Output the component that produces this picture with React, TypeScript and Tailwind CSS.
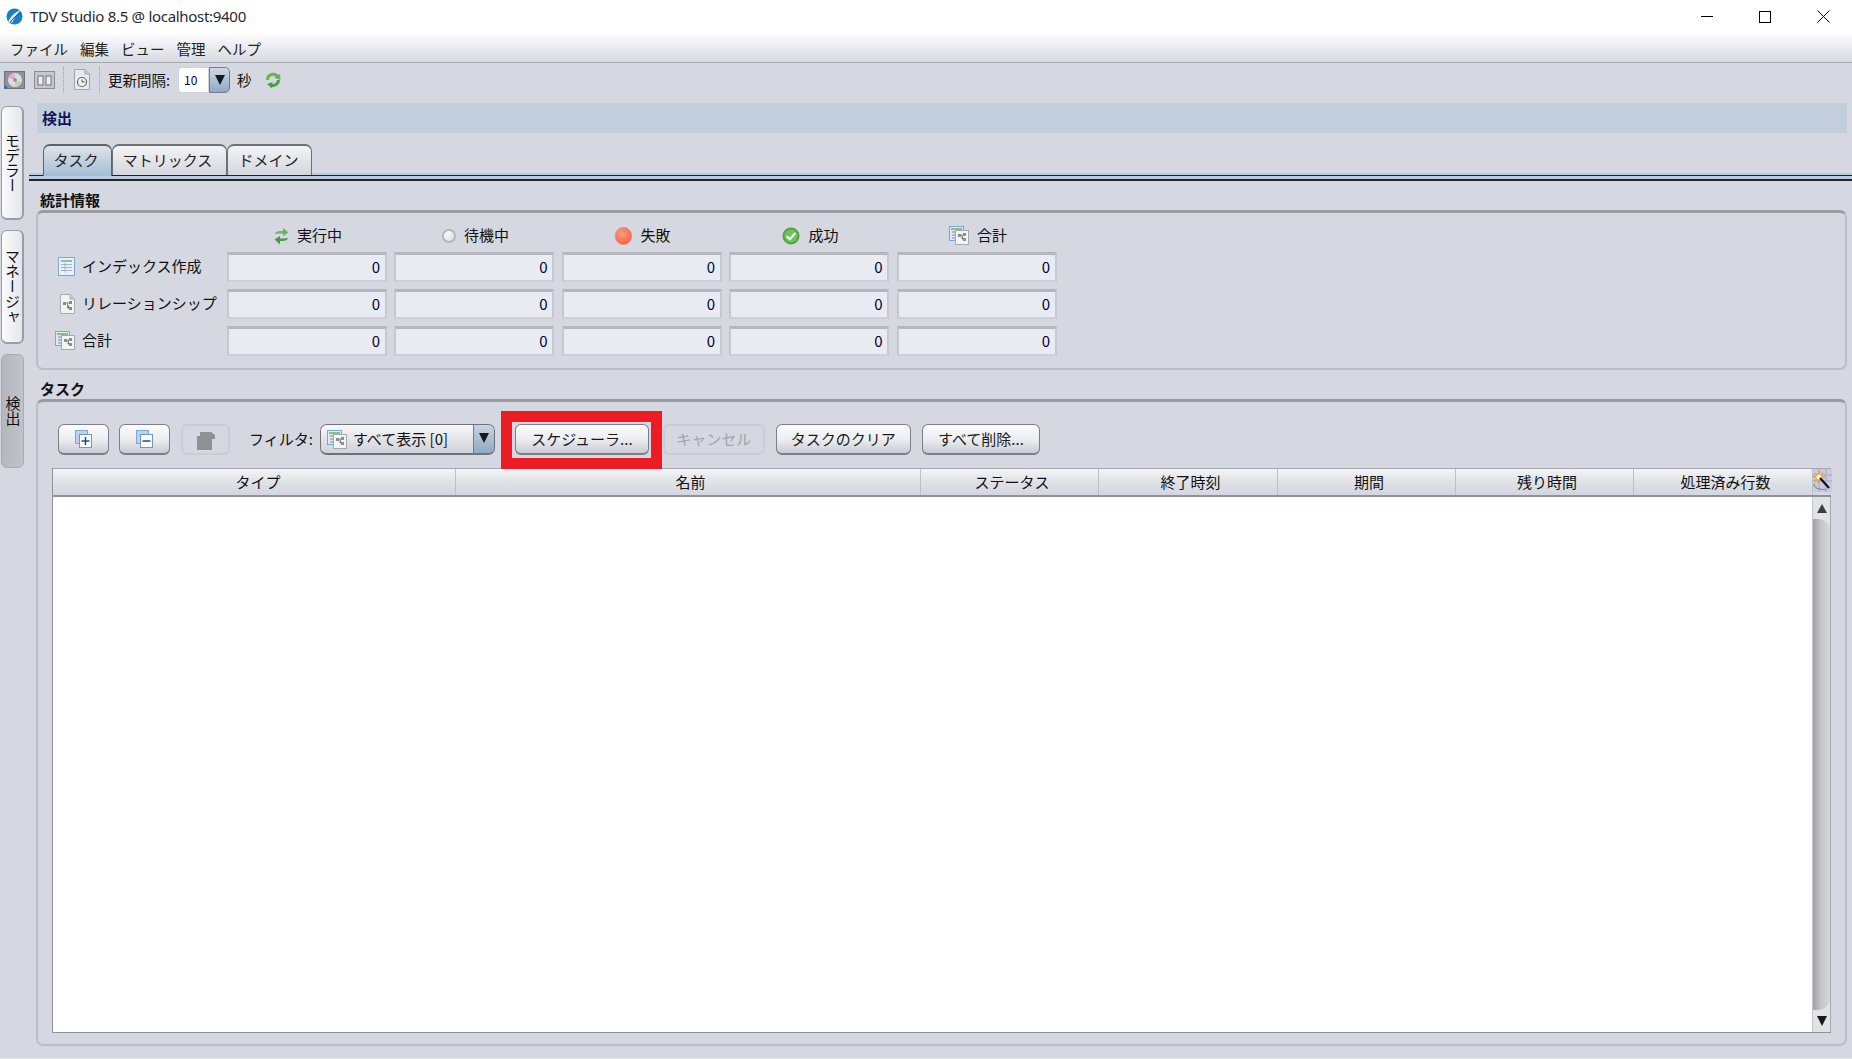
import type { ReactNode } from "react";

const FONT = "font-['Noto_Sans_CJK_JP','Noto_Sans',sans-serif]";

function AppLogo() {
	return (
		<svg width="17" height="17" viewBox="0 0 17 17">
			<circle cx="8.5" cy="8.5" r="8" fill="#1a7fc4" />
			<path d="M2 14 C5 8 9 4 15 2 C11 6 8 10 6 15 Z" fill="#dff0fb" />
			<path d="M4 15 C7 10 10 7 15 5" stroke="#0a4f86" strokeWidth="1" fill="none" />
		</svg>
	);
}

function DiscIcon() {
	return (
		<svg width="21" height="20" viewBox="0 0 21 20">
			<rect x="0.5" y="1.5" width="20" height="17" fill="#8f9196" stroke="#6f7177" />
			<rect x="0" y="16" width="3" height="3" fill="#2f6fb4" />
			<circle cx="11" cy="10" r="7" fill="#dcdde2" />
			<path d="M5 8 A6 6 0 0 1 11 4 L11 10 Z" fill="#e4a8cf" />
			<path d="M17 12 A6 6 0 0 1 11 16 L11 10 Z" fill="#b5dba5" />
			<circle cx="11" cy="10" r="1.8" fill="#8a8c92" />
		</svg>
	);
}

function ColumnsIcon() {
	return (
		<svg width="21" height="20" viewBox="0 0 21 20">
			<rect x="0.5" y="1.5" width="20" height="17" fill="#c5c7cd" stroke="#8b8d93" />
			<rect x="4" y="6" width="5" height="9" fill="#eeeff2" stroke="#6f7177" />
			<rect x="12" y="6" width="5" height="9" fill="#eeeff2" stroke="#6f7177" />
		</svg>
	);
}

function ClockDocIcon() {
	return (
		<svg width="16" height="21" viewBox="0 0 16 21">
			<path d="M0.5 0.5 H11 L15.5 5 V20.5 H0.5 Z" fill="#e6eaec" stroke="#9fa8a8" />
			<path d="M11 0.5 V5 H15.5" fill="#c2cfd0" stroke="#9fa8a8" />
			<circle cx="8" cy="13" r="4.5" fill="#f2f3f3" stroke="#5f6a6a" strokeWidth="1.2" />
			<path d="M8 10.5 V13 H10.5" stroke="#4a5252" fill="none" />
		</svg>
	);
}

function RefreshIcon() {
	return (
		<svg width="16" height="18" viewBox="0 0 16 18">
			<path d="M2.5 9 A5.5 5.5 0 0 1 13 6.5" stroke="#68b548" strokeWidth="3" fill="none" />
			<path d="M13.5 9 A5.5 5.5 0 0 1 5 13.5" stroke="#4f9f3a" strokeWidth="3" fill="none" />
			<path d="M9 6.5 L15.5 9 L15 3 Z" fill="#68b548" />
			<path d="M7.5 11 L2 13 L7 17.5 Z" fill="#4f9f3a" />
		</svg>
	);
}

function RunningIcon() {
	return (
		<svg width="15" height="18" viewBox="0 0 15 18">
			<path d="M1 7 C2 4 5 4 9 4 V1 L14.5 5.5 L9 9 V6.5 C6 6.5 4 6.5 1 7 Z" fill="#6cb45a" />
			<path d="M14 11 C13 14 10 14 6 14 V17.5 L0.5 12.5 L6 9 V11.5 C9 11.5 11 11.5 14 11 Z" fill="#4d9a45" />
		</svg>
	);
}

function RadioDot() {
	return (
		<span className="block w-[14px] h-[14px] rounded-full border-2 border-[#b5b7bc] bg-gradient-to-br from-[#ffffff] to-[#dcdee2]" />
	);
}

function FailIcon() {
	return (
		<span className="block w-[17px] h-[18px] rounded-full border border-[#ec7f72] bg-[radial-gradient(circle_at_40%_35%,#ff9b80,#f4543c)]" />
	);
}

function SuccessIcon() {
	return (
		<svg width="18" height="18" viewBox="0 0 18 18">
			<circle cx="9" cy="9" r="8.5" fill="#4ea83c" />
			<circle cx="9" cy="9" r="6.5" fill="#76c062" />
			<path d="M4.5 9.5 L8 12 L13.5 6" stroke="#eef8ea" strokeWidth="2.2" fill="none" />
		</svg>
	);
}

function TotalIcon() {
	return (
		<svg width="20" height="19" viewBox="0 0 20 19">
			<rect x="0.5" y="0.5" width="14" height="14" fill="#dfe9f6" stroke="#7da6d8" />
			<rect x="2" y="2" width="11" height="2" fill="#86c27a" />
			<path d="M3 6 H6 M3 9 H6 M3 12 H6" stroke="#7d8a9a" />
			<rect x="6.5" y="4.5" width="13" height="14" fill="#f3f4f5" stroke="#a5a9ad" />
			<rect x="9" y="8" width="3" height="3" fill="#8a8f94" />
			<rect x="14" y="7" width="3" height="3" fill="#8a8f94" />
			<rect x="14" y="12" width="3" height="3" fill="#8a8f94" />
			<path d="M12 9 H14 M13 9 V13 H14" stroke="#8a8f94" />
		</svg>
	);
}

function TableIcon() {
	return (
		<svg width="17" height="19" viewBox="0 0 17 19">
			<rect x="0.5" y="0.5" width="16" height="18" fill="#e8f0fb" stroke="#7da6d8" />
			<rect x="3" y="3" width="11" height="2" fill="#8cc47e" />
			<path d="M3 7.5 H14 M3 10.5 H14 M3 13.5 H14 M7 6 V15.5" stroke="#9fb3cc" />
		</svg>
	);
}

function RelationIcon() {
	return (
		<svg width="15" height="20" viewBox="0 0 15 20">
			<path d="M0.5 0.5 H10 L14.5 5 V19.5 H0.5 Z" fill="#f2f4f4" stroke="#a5aeae" />
			<path d="M10 0.5 V5 H14.5" fill="#bfcccc" stroke="#a5aeae" />
			<rect x="3" y="8" width="3" height="3" fill="#858b8b" />
			<rect x="9" y="7" width="3" height="3" fill="#858b8b" />
			<rect x="9" y="13" width="3" height="3" fill="#858b8b" />
			<path d="M6 9 H9 M7.5 9 V14 H9" stroke="#858b8b" />
		</svg>
	);
}

function StackIcon({ minus }: { minus?: boolean }) {
	return (
		<svg width="17" height="18" viewBox="0 0 17 18">
			<rect x="0.5" y="0.5" width="12" height="13" fill="#bcd2ec" stroke="#7da6d8" />
			<rect x="4.5" y="4.5" width="12" height="13" fill="#fbfcfe" stroke="#6f97c6" />
			<path d="M6.5 11 H14.5" stroke="#0f4684" strokeWidth="1.4" />
			{!minus && <path d="M10.5 7 V15" stroke="#0f4684" strokeWidth="1.4" />}
		</svg>
	);
}

function DisabledTrash() {
	return (
		<svg width="20" height="20" viewBox="0 0 20 20">
			<path d="M1 6 H4 V2 H15 L19 5 V9 H16 V20 H1 Z" fill="#8f9094" />
		</svg>
	);
}

function WandIcon() {
	return (
		<svg width="19" height="23" viewBox="0 0 19 23">
			<rect x="0" y="0" width="19" height="23" fill="#c9c9e0" />
			<path d="M0 6 H19 M0 12 H19 M6 0 V23 M13 0 V23" stroke="#a7a7cc" />
			<path d="M6 2 V14 M0 8 H12 M2 4 L10 12 M10 4 L2 12" stroke="#f0a020" strokeWidth="1.6" />
			<circle cx="6" cy="8" r="2.5" fill="#fff6c8" />
			<path d="M7 9 L16 19" stroke="#111" strokeWidth="2.2" />
			<path d="M1 15 C1 21 13 21 13 20" stroke="#777" fill="none" />
		</svg>
	);
}

function DownTriangle() {
	return <span className="block w-0 h-0 border-x-[5px] border-x-transparent border-t-[10px] border-t-[#15181d]" />;
}

function Btn({ children, className, disabled }: { children: ReactNode; className: string; disabled?: boolean }) {
	return (
		<button
			disabled={disabled}
			className={`h-[31px] flex items-center justify-center rounded-[6px] text-[15px] shrink-0 ${
				disabled
					? "border-2 border-[#cbcdd4] text-[#a2a5ab]"
					: "border border-[#7c7f87] border-b-2 bg-gradient-to-b from-[#fbfbfc] via-[#eceef1] to-[#c9ccd4] text-[#1a1a1a]"
			} ${className}`}>
			{children}
		</button>
	);
}

function SideTab({ label, active }: { label: string; active?: boolean }) {
	return (
		<div
			className={`h-[114px] w-[23px] flex items-center justify-center rounded-[6px] text-[15px] text-[#111] border ${
				active
					? "bg-gradient-to-r from-[#b4b7bc] to-[#c0c3c8] border-[#a9acb2]"
					: "bg-gradient-to-r from-[#fbfbfc] to-[#e4e6eb] border-[#9a9da3] border-b-2 border-r-2"
			}`}>
			<span className="[writing-mode:vertical-rl] leading-[20px]">{label}</span>
		</div>
	);
}

function StatField() {
	return (
		<div className="h-[30px] flex items-center justify-end pr-[4.5px] bg-[#e9ebf2] border-t-[3px] border-x-2 border-b-2 border-t-[#b5b7bd] border-x-[#c6c8ce] border-b-[#cdcfd6] text-[15px] text-[#00003c]">
			0
		</div>
	);
}

function StatHeader({ icon, label }: { icon: ReactNode; label: string }) {
	return (
		<div className="h-[19px] pl-[3px] flex items-center justify-center gap-[8px] text-[15px] text-[#111]">
			{icon}
			<span>{label}</span>
		</div>
	);
}

function StatRow({ icon, label }: { icon: ReactNode; label: string }) {
	return (
		<>
			<div className="h-[30px] pb-[1px] flex items-center text-[15px] text-[#111] whitespace-nowrap">
				<span className="w-[44px] flex justify-end pr-[7px] shrink-0">{icon}</span>
				<span>{label}</span>
			</div>
			{[0, 1, 2, 3, 4].map((i) => (
				<StatField key={i} />
			))}
		</>
	);
}

const columns = [
	{ label: "タイプ", cls: "w-[403px] pl-[8px]" },
	{ label: "名前", cls: "w-[465px] pl-[5px]" },
	{ label: "ステータス", cls: "w-[178px] pl-[5px]" },
	{ label: "終了時刻", cls: "w-[179px] pl-[5px]" },
	{ label: "期間", cls: "w-[178px] pl-[5px]" },
	{ label: "残り時間", cls: "w-[178px] pl-[5px]" },
	{ label: "処理済み行数", cls: "w-[179px] pl-[5px]" },
];

export default function App() {
	return (
		<div className={`w-[1852px] h-[1059px] flex flex-col overflow-hidden bg-[#d5d8e0] ${FONT}`}>
			{/* Window title bar */}
			<div className="h-[35px] bg-white flex items-center shrink-0 pb-[2px]">
				<span className="ml-[6px] flex">
					<AppLogo />
				</span>
				<span className="ml-[7px] text-[15px] tracking-[-0.3px] text-[#1f2a36] font-['Noto_Sans',sans-serif]">
					TDV Studio 8.5 @ localhost:9400
				</span>
				<div className="ml-auto flex items-center">
					<div className="w-[59px] flex justify-center">
						<span className="block w-[12px] h-px bg-black" />
					</div>
					<div className="w-[58px] flex justify-center">
						<span className="block w-[12px] h-[12px] border border-black" />
					</div>
					<div className="w-[58px] flex justify-center">
						<svg width="13" height="13" viewBox="0 0 13 13">
							<path d="M0.5 0.5 L12.5 12.5 M12.5 0.5 L0.5 12.5" stroke="#000" strokeWidth="1" />
						</svg>
					</div>
				</div>
			</div>

			{/* Menu bar */}
			<div className="h-[28px] shrink-0 flex items-center gap-[12px] pl-[10px] pt-[1px] text-[14.5px] text-[#222] bg-gradient-to-b from-[#fbfbfc] to-[#d7dae1] border-b border-[#a6a9b0]">
				<span>ファイル</span>
				<span>編集</span>
				<span>ビュー</span>
				<span>管理</span>
				<span>ヘルプ</span>
			</div>

			{/* Toolbar */}
			<div className="h-[37px] shrink-0 flex items-center pb-[4px] text-[14.5px] text-[#111]">
				<span className="ml-[4px] flex">
					<DiscIcon />
				</span>
				<span className="ml-[9px] flex">
					<ColumnsIcon />
				</span>
				<span className="ml-[8px] h-[26px] border-l border-dotted border-[#9ea1a8]" />
				<span className="ml-[10px] flex">
					<ClockDocIcon />
				</span>
				<span className="ml-[9px] h-[26px] border-l border-dotted border-[#9ea1a8]" />
				<span className="ml-[8px]">更新間隔:</span>
				<div className="ml-[8px] w-[52px] h-[26px] flex">
					<div className="w-[31px] bg-white flex items-center pl-[5px] text-[12px] text-[#00004a] rounded-l-[4px] border border-[#d2d4da]">
						10
					</div>
					<div className="flex-1 flex items-center justify-center rounded-r-[5px] border border-[#6f7d8c] bg-gradient-to-b from-[#cdd9e4] to-[#8fabc4]">
						<DownTriangle />
					</div>
				</div>
				<span className="ml-[7px]">秒</span>
				<span className="ml-[13px] flex">
					<RefreshIcon />
				</span>
			</div>

			{/* Body */}
			<div className="flex-1 min-h-0 flex border-b border-[#e0e2e7]">
				<div className="w-[29px] shrink-0 flex flex-col gap-[10px] pt-[6px] pl-[1px]">
					<SideTab label="モデラー" />
					<SideTab label="マネージャ" />
					<SideTab label="検出" active />
				</div>

				<div className="flex-1 min-w-0 flex flex-col">
					<div className="mt-[3px] ml-[8px] mr-[5px] h-[30px] shrink-0 flex items-center pl-[5px] bg-[#c1cfdd] text-[15px] font-bold text-[#14145a]">
						検出
					</div>

					{/* Tabs */}
					<div className="mt-[11px] h-[37px] shrink-0 border-b-2 border-[#1b2431] bg-gradient-to-b from-[#d5d8e0] from-[84%] to-[#b9cbdc] to-[84%]">
						<div className="h-[32px] flex items-end pl-[14px] border-b border-[#1b2431] text-[15px] leading-[22px] text-[#222]">
							<div className="h-[32px] -mb-px w-[69px] flex items-center justify-center pr-[3px] pb-[2px] rounded-t-[7px] border-x border-t-2 border-[#58636e] bg-gradient-to-b from-[#dfe3e9] to-[#a3bdd3]">
								タスク
							</div>
							<div className="h-[31px] w-[115px] flex items-center justify-center pr-[4px] pb-[2px] rounded-t-[7px] border-x border-t-2 border-[#6c7078] bg-gradient-to-b from-[#f3f4f6] to-[#d3d6dd]">
								マトリックス
							</div>
							<div className="h-[31px] w-[85px] flex items-center justify-center pr-[2px] pb-[2px] rounded-t-[7px] border-x border-t-2 border-[#6c7078] bg-gradient-to-b from-[#f3f4f6] to-[#d3d6dd]">
								ドメイン
							</div>
						</div>
					</div>

					{/* Statistics */}
					<div className="h-[29px] shrink-0 ml-[11px] flex items-end text-[15px] font-bold text-[#111] leading-[21px]">
						統計情報
					</div>
					<div className="ml-[7px] mr-[5px] shrink-0 rounded-[7px] border-x-2 border-b-2 border-t-[3px] border-x-[#bcbec4] border-b-[#bcbec4] border-t-[#9a9ca2] pt-[13px] pb-[12px]">
						<div className="grid grid-cols-[181px_repeat(5,160px)] gap-x-[7.5px] gap-y-[7px] items-center">
							<div />
							<StatHeader icon={<RunningIcon />} label="実行中" />
							<StatHeader icon={<RadioDot />} label="待機中" />
							<StatHeader icon={<FailIcon />} label="失敗" />
							<StatHeader icon={<SuccessIcon />} label="成功" />
							<StatHeader icon={<TotalIcon />} label="合計" />
							<StatRow icon={<TableIcon />} label="インデックス作成" />
							<StatRow icon={<RelationIcon />} label="リレーションシップ" />
							<StatRow icon={<TotalIcon />} label="合計" />
						</div>
					</div>

					{/* Tasks */}
					<div className="mt-[9px] h-[20px] shrink-0 ml-[11px] flex items-center text-[15px] font-bold text-[#111]">
						タスク
					</div>
					<div className="flex-1 min-h-0 flex flex-col ml-[7px] mr-[5px] mb-[12px] rounded-[7px] border-x-2 border-b-2 border-t-[3px] border-x-[#bcbec4] border-b-[#bcbec4] border-t-[#9a9ca2] px-[14px] pb-[11px]">
						<div className="h-[44px] mt-[22px] shrink-0 flex items-start">
							<Btn className="ml-[6px] w-[51px]">
								<StackIcon />
							</Btn>
							<Btn className="ml-[10px] w-[51px]">
								<StackIcon minus />
							</Btn>
							<Btn className="ml-[11px] w-[49px]" disabled>
								<DisabledTrash />
							</Btn>
							<span className="ml-[19px] h-[31px] flex items-center text-[15px] text-[#111] whitespace-nowrap">フィルタ:</span>
							<div className="ml-[7px] w-[175px] h-[31px] flex rounded-[7px] border border-[#6f7278] border-b-2 overflow-hidden shrink-0">
								<div className="flex-1 flex items-center gap-[6px] pl-[6px] bg-gradient-to-b from-[#f8f8fa] to-[#cfd2da] text-[15px] text-[#111] whitespace-nowrap">
									<TotalIcon />
									<span>すべて表示 [0]</span>
								</div>
								<div className="w-[21px] flex items-start pt-[8px] justify-center bg-gradient-to-b from-[#c8d5e1] to-[#8faac3] border-l border-[#6f7d8c]">
									<DownTriangle />
								</div>
							</div>
							{/* red annotation around the scheduler button */}
							<div className="relative ml-[20px] shrink-0">
								<Btn className="w-[134px]">スケジューラ...</Btn>
								<div className="absolute -left-[14px] -right-[13px] -top-[13px] -bottom-[14px] border-[11px] border-[#ed1c24]" />
							</div>
							<Btn className="ml-[14px] w-[102px]" disabled>
								キャンセル
							</Btn>
							<Btn className="ml-[11px] w-[135px]">タスクのクリア</Btn>
							<Btn className="ml-[11px] w-[118px]">すべて削除...</Btn>
						</div>

						{/* Task table */}
						<div className="flex-1 min-h-0 flex flex-col bg-white border-l border-b border-[#8f9298]">
							<div className="h-[29px] shrink-0 flex border-t border-[#a5a7ae] border-b-2 border-b-[#8f929a] bg-gradient-to-b from-[#f3f4f6] via-[#e0e2e6] to-[#d3d6df] text-[15px] text-[#111]">
								{columns.map((c) => (
									<div
										key={c.label}
										className={`${c.cls} shrink-0 flex items-center justify-center border-r border-[#bcbfc6]`}>
										{c.label}
									</div>
								))}
								<div className="flex-1 flex justify-center">
									<WandIcon />
								</div>
							</div>
							<div className="flex-1 min-h-0 flex">
								<div className="flex-1" />
								<div className="w-[19px] shrink-0 flex flex-col border-l border-[#c4c6cb] border-r border-r-[#a6a9af] bg-[#e2e3e6]">
									<div className="h-[22px] flex items-center justify-center">
										<span className="block w-0 h-0 border-x-[5px] border-x-transparent border-b-[9px] border-b-[#3a3c40]" />
									</div>
									<div className="flex-1 rounded-tr-[12px] rounded-br-[12px] bg-gradient-to-r from-[#a2a3a6] via-[#c6c7ca] to-[#d6d7da]" />
									<div className="h-[22px] flex items-center justify-center">
										<DownTriangle />
									</div>
								</div>
							</div>
						</div>
					</div>
				</div>
			</div>
		</div>
	);
}
